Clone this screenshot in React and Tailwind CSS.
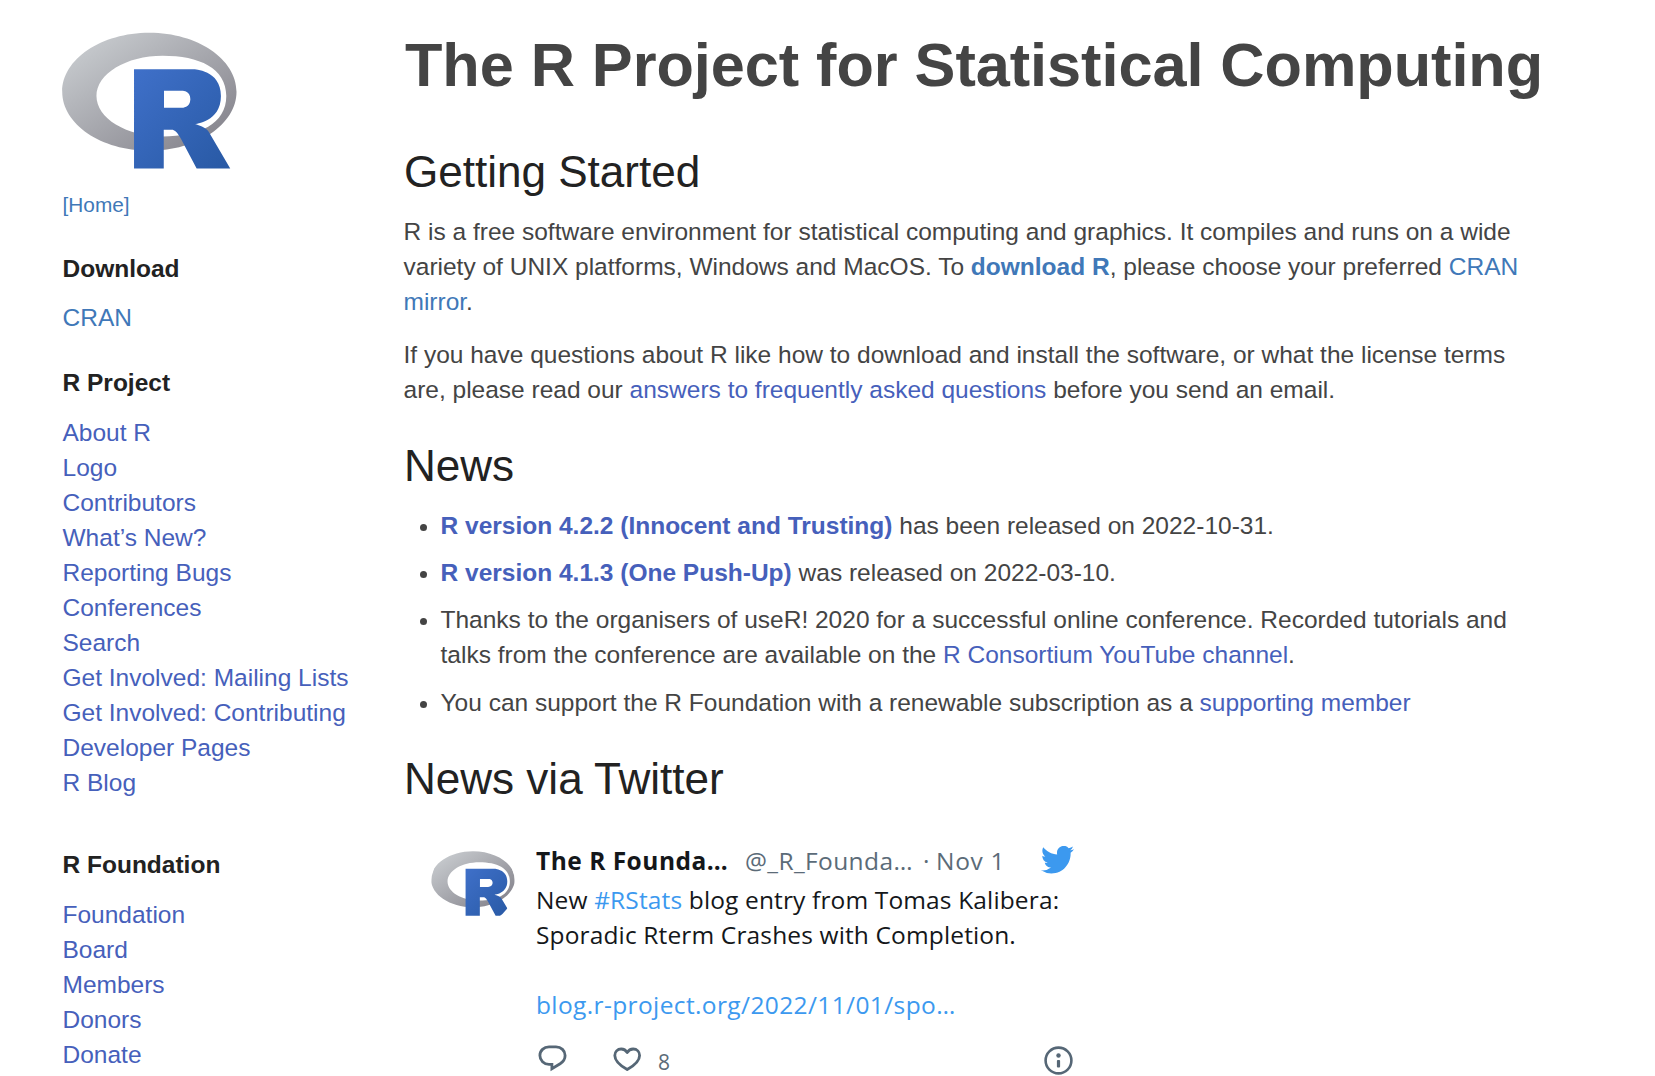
const PROJECT_LINKS = [
  "About R",
  "Logo",
  "Contributors",
  "What’s New?",
  "Reporting Bugs",
  "Conferences",
  "Search",
  "Get Involved: Mailing Lists",
  "Get Involved: Contributing",
  "Developer Pages",
  "R Blog",
];

const FOUNDATION_LINKS = ["Foundation", "Board", "Members", "Donors", "Donate"];

function RLogo({ id, className }) {
  return (
    <svg className={className} viewBox="0 0 724 561" preserveAspectRatio="none" aria-label="R logo">
      <defs>
        <linearGradient id={id + "-ring"} x1="0" y1="0" x2="1" y2="1">
          <stop offset="0" stopColor="#cfd3d6" />
          <stop offset="1" stopColor="#7e7c85" />
        </linearGradient>
        <linearGradient id={id + "-letter"} x1="0" y1="0" x2="1" y2="1">
          <stop offset="0" stopColor="#3f70c9" />
          <stop offset="1" stopColor="#2859a4" />
        </linearGradient>
      </defs>
      <path
        fill={`url(#${id}-ring)`}
        fillRule="evenodd"
        d="M361.453,485.937C162.329,485.937,0.906,377.828,0.906,244.469C0.906,111.109,162.329,3,361.453,3C560.578,3,722,111.109,722,244.469C722,377.828,560.578,485.937,361.453,485.937ZM416.641,97.406C265.289,97.406,142.594,171.314,142.594,262.484C142.594,353.654,265.289,427.562,416.641,427.562C567.992,427.562,679.687,377.033,679.687,262.484C679.687,147.971,567.992,97.406,416.641,97.406Z"
      />
      <path
        fill={`url(#${id}-letter)`}
        fillRule="evenodd"
        d="M550,377C550,377,571.822,383.585,584.5,390C588.899,392.226,596.51,396.668,602,402.5C607.378,408.212,610,414,610,414L696,559L557,559.062L492,437C492,437,478.69,414.131,470.5,407.5C463.668,401.969,460.755,400,454,400C449.298,400,420.974,400,420.974,400L421,558.974L298,559.026L298,152.938L545,152.938C545,152.938,657.5,154.967,657.5,262C657.5,369.033,550,377,550,377ZM496.5,241.024L422.037,240.976L422,310.026L496.5,310.002C496.5,310.002,531,309.895,531,274.877C531,239.155,496.5,241.024,496.5,241.024Z"
      />
    </svg>
  );
}

function TextLink({ className = "text-[#4660bb]", children }) {
  return (
    <a href="#" className={className}>
      {children}
    </a>
  );
}

function SideHeading({ className, children }) {
  return <h2 className={`text-[24.5px] leading-[27px] font-bold text-[#222] ${className}`}>{children}</h2>;
}

function LinkList({ items }) {
  return (
    <ul className="mt-[19px]">
      {items.map((item) => (
        <li key={item}>
          <TextLink>{item}</TextLink>
        </li>
      ))}
    </ul>
  );
}

function Sidebar() {
  return (
    <nav className="w-[403.5px] shrink-0 pl-[62.5px] pt-8 whitespace-nowrap">
      <RLogo id="site" className="-ml-[0.5px] block h-[137px] w-[175px]" />
      <p className="mt-[18px] text-[20.825px]">
        <TextLink className="text-[#4078b8]">[Home]</TextLink>
      </p>
      <SideHeading className="mt-[33px]">Download</SideHeading>
      <p className="mt-[18px]">
        <TextLink className="text-[#4078b8]">CRAN</TextLink>
      </p>
      <SideHeading className="mt-[34px]">R Project</SideHeading>
      <LinkList items={PROJECT_LINKS} />
      <SideHeading className="mt-[51px]">R Foundation</SideHeading>
      <LinkList items={FOUNDATION_LINKS} />
    </nav>
  );
}

function SectionHeading({ className, children }) {
  return (
    <h2 className={`ml-[0.5px] text-[44.1px] leading-[48.5px] tracking-[-0.03px] text-[#222] ${className}`}>
      {children}
    </h2>
  );
}

function Tweet() {
  return (
    <article className="ml-[27.5px] mt-[39px] flex w-[643px] font-['Open_Sans','Noto_Sans',sans-serif] text-[24.5px] leading-[35px] text-[#14171a]">
      <div className="flex size-[84px] shrink-0 items-center justify-center overflow-hidden rounded-full">
        <RLogo id="avatar" className="-mt-px block h-[65px] w-[84px]" />
      </div>
      <div className="ml-[21px] mt-px w-[538px]">
        <header className="flex whitespace-nowrap text-[#5b6b78]">
          <span className="w-[209px] font-bold tracking-[0.5px] text-[#14171a]">The R Founda…</span>
          <span className="w-[178px] tracking-[0.38px]">@_R_Founda…</span>
          <span className="w-[13px]">·</span>
          <span className="tracking-[0.7px]">Nov 1</span>
          <svg
            className="ml-auto mt-[3px] h-[27.5px] w-[33px]"
            viewBox="0 0 24 19.5"
            fill="#3c99ef"
            preserveAspectRatio="none"
          >
            <path d="M23.953 2.31a10 10 0 0 1-2.825.775 4.958 4.958 0 0 0 2.163-2.723c-.951.555-2.005.959-3.127 1.184a4.92 4.92 0 0 0-8.384 4.482C7.69 5.833 4.067 3.868 1.64.892a4.822 4.822 0 0 0-.666 2.475c0 1.71.87 3.213 2.188 4.096a4.904 4.904 0 0 1-2.228-.616v.06a4.923 4.923 0 0 0 3.946 4.827 4.996 4.996 0 0 1-2.212.085 4.936 4.936 0 0 0 4.604 3.417 9.867 9.867 0 0 1-6.102 2.105c-.39 0-.779-.023-1.17-.067a13.995 13.995 0 0 0 7.557 2.209c9.053 0 13.998-7.496 13.998-13.985 0-.21 0-.42-.015-.63a9.935 9.935 0 0 0 2.46-2.548z" />
          </svg>
        </header>
        <p className="mt-[4px] whitespace-nowrap tracking-[0.14px]">
          New <TextLink className="text-[#3c99ef]">#RStats</TextLink> blog entry from Tomas Kalibera:
          <br />
          Sporadic Rterm Crashes with Completion.
          <br />
          <br />
          <TextLink className="tracking-[0.38px] text-[#3c99ef]">blog.r-project.org/2022/11/01/spo…</TextLink>
        </p>
        <footer className="mt-[22px] flex items-start text-[21px] text-[#5b6b78]">
          <svg
            className="ml-[2px] h-[28px] w-[29px]"
            viewBox="0 0 29 28"
            fill="none"
            stroke="#566776"
            strokeWidth="2.8"
            strokeLinejoin="miter"
          >
            <path d="M11 2.900h7c5.200 0 9.100 3.700 9.100 8.600c0 3.600-1.900 6.300-5 8.300l-8.200 5v-4.400h-2.900c-5.200 0-9.100-4-9.100-8.900c0-4.900 3.900-8.600 9.100-8.600z" />
          </svg>
          <svg
            className="ml-[46px] mt-[2px] h-[26px] w-[29px]"
            viewBox="0 0 29 26"
            fill="none"
            stroke="#566776"
            strokeWidth="2.8"
            strokeLinejoin="round"
          >
            <path d="M14.200 6.600c1.300-2.300 3.500-3.600 6-3.600c3.800 0 6.400 2.900 6.400 6.400c0 5.400-6.300 10.600-12.400 14.100c-6.100-3.500-12.400-8.700-12.400-14.100c0-3.500 2.600-6.400 6.400-6.400c2.500 0 4.700 1.300 6 3.600z" />
          </svg>
          <span className="ml-4 mt-[2px] leading-[32px]">8</span>
          <svg className="ml-auto mr-px mt-[2px] h-[29px] w-[29px]" viewBox="0 0 29 29" fill="#566776">
            <circle cx="14.500" cy="14.500" r="12.900" fill="none" stroke="#566776" strokeWidth="2.600" />
            <circle cx="14.500" cy="9.500" r="2.200" />
            <rect x="12.900" y="14" width="3.200" height="7.500" rx="1" />
          </svg>
        </footer>
      </div>
    </article>
  );
}

function Main() {
  return (
    <main className="w-[1160px] shrink-0 pt-8">
      <h1 className="ml-[1.5px] whitespace-nowrap text-[61.25px] leading-[67.4px] font-bold tracking-[-0.05px] text-[#444]">
        The R Project for Statistical Computing
      </h1>
      <SectionHeading className="mt-[49px]">Getting Started</SectionHeading>
      <p className="mt-[17.5px]">
        R is a free software environment for statistical computing and graphics. It compiles and runs on a wide
        <br />
        variety of UNIX platforms, Windows and MacOS. To{" "}
        <TextLink className="font-bold text-[#4078b8]">download R</TextLink>, please choose your preferred{" "}
        <TextLink className="text-[#4078b8]">
          CRAN
          <br />
          mirror
        </TextLink>
        .
      </p>
      <p className="mt-[17.5px]">
        If you have questions about R like how to download and install the software, or what the license terms
        <br />
        are, please read our <TextLink>answers to frequently asked questions</TextLink> before you send an email.
      </p>
      <SectionHeading className="mt-[35px]">News</SectionHeading>
      <ul className="mt-[17.5px] flex list-disc flex-col gap-[12.25px] pl-[37px]">
        <li>
          <TextLink className="font-bold text-[#4660bb]">R version 4.2.2 (Innocent and Trusting)</TextLink> has been
          released on 2022-10-31.
        </li>
        <li>
          <TextLink className="font-bold text-[#4660bb]">R version 4.1.3 (One Push-Up)</TextLink> was released on
          2022-03-10.
        </li>
        <li>
          Thanks to the organisers of useR! 2020 for a successful online conference. Recorded tutorials and
          <br />
          talks from the conference are available on the <TextLink>R Consortium YouTube channel</TextLink>.
        </li>
        <li>
          You can support the R Foundation with a renewable subscription as a <TextLink>supporting member</TextLink>
        </li>
      </ul>
      <SectionHeading className="mt-[35px]">News via Twitter</SectionHeading>
      <Tweet />
    </main>
  );
}

export default function App() {
  return (
    <div className="flex h-[1076px] w-[1655px] overflow-hidden bg-white font-['Liberation_Sans',Arial,sans-serif] text-[24.5px] leading-[35px] text-[#444]">
      <Sidebar />
      <Main />
    </div>
  );
}
